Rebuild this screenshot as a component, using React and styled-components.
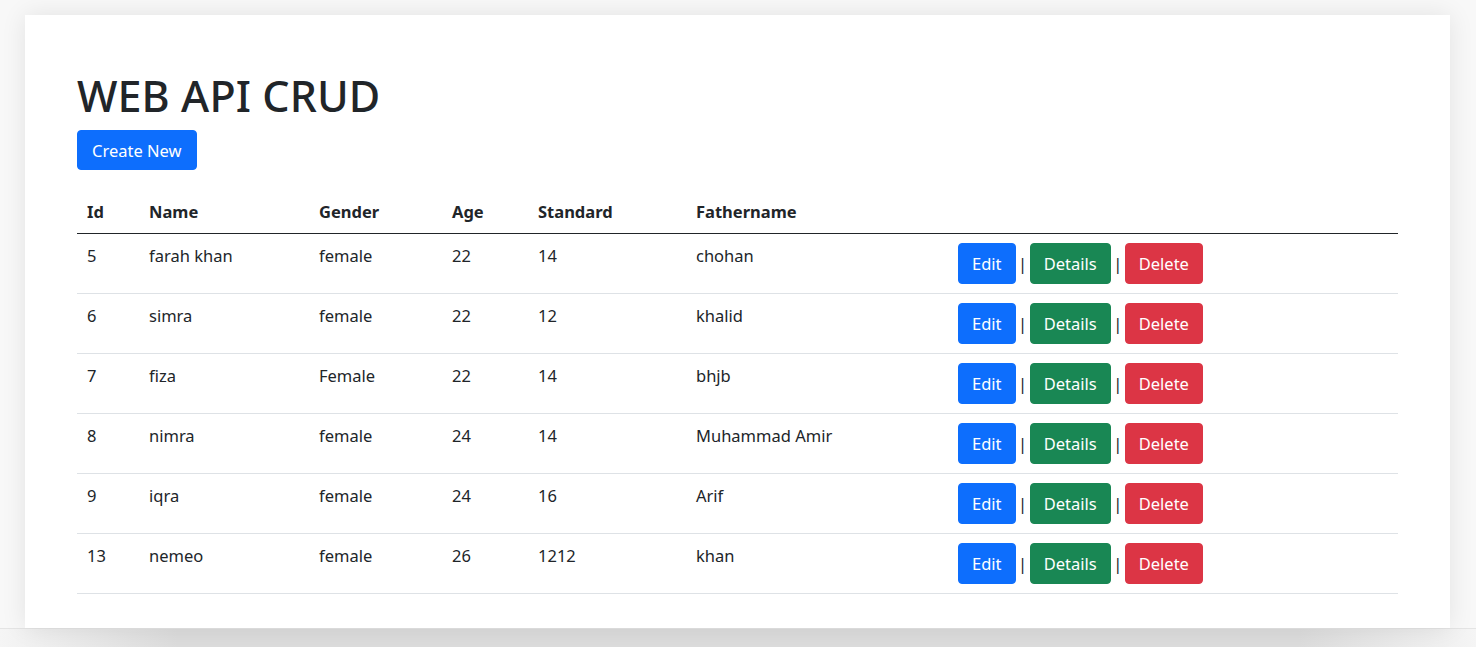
import React from "react";
import styled, { createGlobalStyle } from "styled-components";

const GlobalStyle = createGlobalStyle`
  html, body { margin: 0; padding: 0; }
  *, *::before, *::after { box-sizing: border-box; }
  body {
    background: #f8f8f8;
    font-family: "Noto Sans", "Open Sans", sans-serif;
    color: #212529;
    font-size: 16px;
    overflow: hidden;
  }
`;

const Page = styled.div`
  padding: 15px 26px 0 25px;
`;

const Card = styled.main`
  background: #fff;
  box-shadow: 0 0 24px rgba(0, 0, 0, 0.09);
  padding: 55px 52px 34px;
  position: relative;
  z-index: 1;
`;

const Title = styled.h1`
  margin: 0 0 8px;
  font-size: 43px;
  font-weight: 500;
  line-height: 52px;
  color: #212529;
  letter-spacing: 0.1px;
`;

const Btn = styled.button`
  display: inline-block;
  font-family: inherit;
  font-size: 16.5px;
  line-height: 25px;
  padding: 7px 13px;
  border: 1px solid ${(p) => p.$bg};
  border-radius: 4px;
  background: ${(p) => p.$bg};
  color: #fff;
  cursor: pointer;
  vertical-align: middle;
`;

const CreateBtn = styled(Btn)`
  padding: 6.5px 14px;
  margin-bottom: 21px;
`;

const Table = styled.table`
  width: 100%;
  table-layout: fixed;
  border-collapse: collapse;
  font-size: 16.5px;
`;

const Col = styled.col`
  width: ${(p) => p.$w || "auto"};
`;

const Th = styled.th`
  text-align: left;
  font-weight: 700;
  padding: 9px 10px;
  line-height: 24px;
  border-bottom: 1px solid #212529;
`;

const Row = styled.tr`
  border-bottom: 1px solid #dee2e6;
`;

const Td = styled.td`
  padding: 10px 10px 8px;
  line-height: 24px;
  vertical-align: top;
`;

const Actions = styled.td`
  padding: 9px 10px;
  white-space: nowrap;
`;

const Sep = styled.span`
  margin: 0 2.5px;
  color: #212529;
  vertical-align: middle;
`;

const Footer = styled.div`
  height: 20px;
  border-top: 1px solid #e4e4e4;
  background: linear-gradient(to right, #f5f5f5 0%, #dcdcdc 12%, #dcdcdc 88%, #f5f5f5 100%);
`;

const rows = [
  [5, "farah khan", "female", 22, 14, "chohan"],
  [6, "simra", "female", 22, 12, "khalid"],
  [7, "fiza", "Female", 22, 14, "bhjb"],
  [8, "nimra", "female", 24, 14, "Muhammad Amir"],
  [9, "iqra", "female", 24, 16, "Arif"],
  [13, "nemeo", "female", 26, 1212, "khan"],
];

export default function App() {
  return (
    <>
      <GlobalStyle />
      <Page>
        <Card>
          <Title>WEB API CRUD</Title>
          <CreateBtn $bg="#0d6efd">Create New</CreateBtn>
          <Table>
            <colgroup>
              <Col $w="62px" />
              <Col $w="170px" />
              <Col $w="133px" />
              <Col $w="86px" />
              <Col $w="158px" />
              <Col $w="262px" />
              <Col />
            </colgroup>
            <thead>
              <tr>
                <Th>Id</Th>
                <Th>Name</Th>
                <Th>Gender</Th>
                <Th>Age</Th>
                <Th>Standard</Th>
                <Th>Fathername</Th>
                <Th></Th>
              </tr>
            </thead>
            <tbody>
              {rows.map((r) => (
                <Row key={r[0]}>
                  {r.map((c, i) => (
                    <Td key={i}>{c}</Td>
                  ))}
                  <Actions>
                    <Btn $bg="#0d6efd">Edit</Btn>
                    <Sep>|</Sep>
                    <Btn $bg="#198754">Details</Btn>
                    <Sep>|</Sep>
                    <Btn $bg="#dc3545">Delete</Btn>
                  </Actions>
                </Row>
              ))}
            </tbody>
          </Table>
        </Card>
      </Page>
      <Footer />
    </>
  );
}
